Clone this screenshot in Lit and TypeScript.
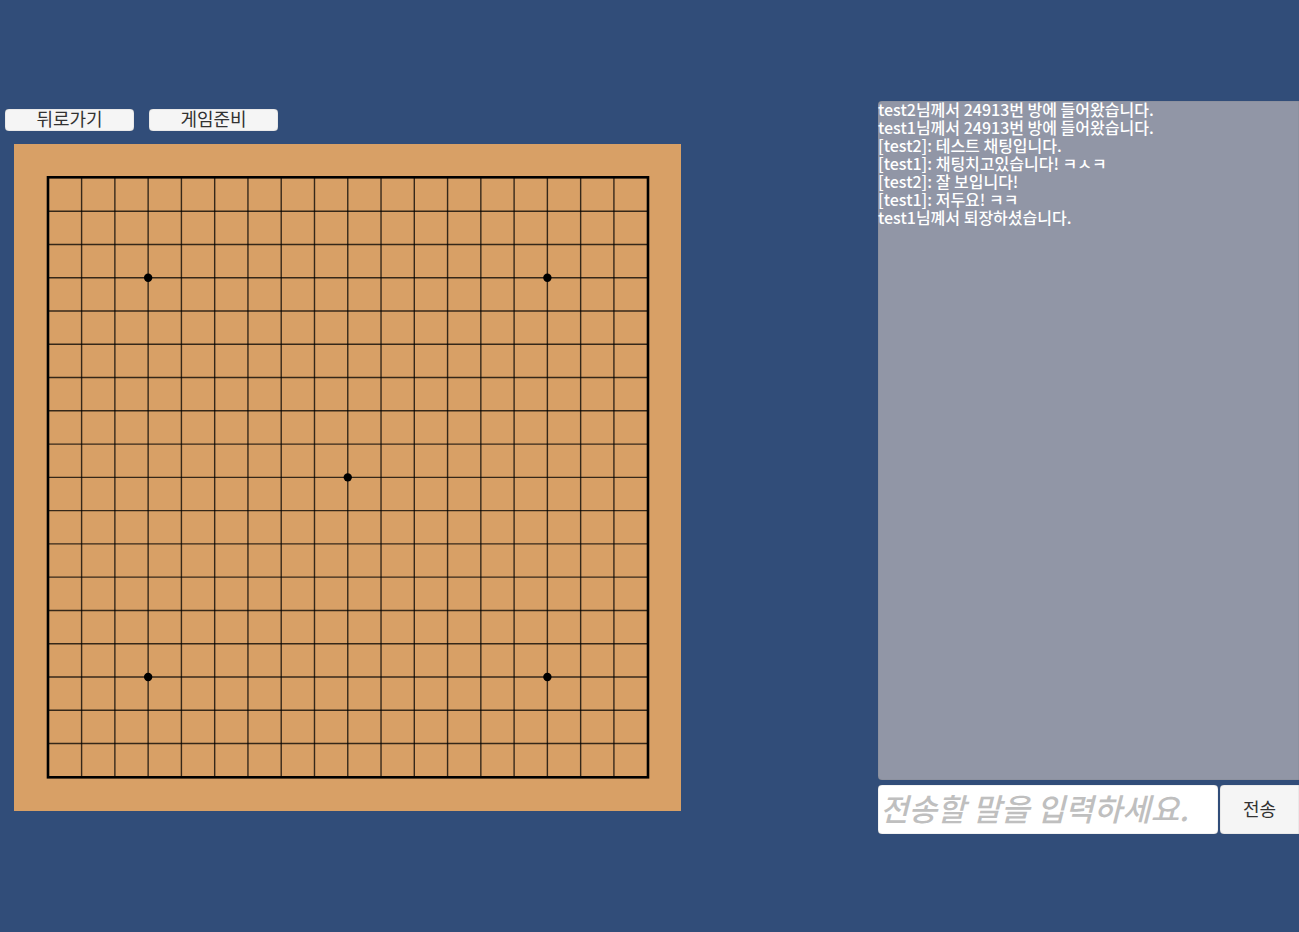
import { LitElement, html, svg, css } from "lit";
import { customElement, state } from "lit/decorators.js";

const FIRST = 34;
const LAST = 634;
const INNER = Array.from({ length: 17 }, (_, i) => 67.6 + i * 33.27);
const STARS: [number, number][] = [
  [3, 3],
  [15, 3],
  [9, 9],
  [3, 15],
  [15, 15],
];

@customElement("go-board")
export class GoBoard extends LitElement {
  static styles = css`
    :host {
      display: block;
    }
    .board {
      display: block;
      width: 100%;
      height: auto;
      background: #d8a066;
    }
    .line {
      stroke: #000;
      stroke-opacity: 0.75;
      stroke-width: 1.4;
    }
    .frame {
      fill: none;
      stroke: #000;
      stroke-width: 2.6;
    }
  `;

  render() {
    return html`<svg class="board" viewBox="0 0 667 667" role="img" aria-label="바둑판">
      ${INNER.map(
        (p) => svg`
          <line class="line" x1=${p} y1=${FIRST} x2=${p} y2=${LAST}></line>
          <line class="line" x1=${FIRST} y1=${p - 0.4} x2=${LAST} y2=${p - 0.4}></line>`
      )}
      <rect class="frame" x=${FIRST} y="33.3" width="600" height="600"></rect>
      ${STARS.map(
        ([c, r]) => svg`<circle cx=${INNER[c - 1]} cy=${INNER[r - 1] - 0.4} r="4.2"></circle>`
      )}
    </svg>`;
  }
}

@customElement("app-root")
export class AppRoot extends LitElement {
  @state() private messages = [
    "test2님께서 24913번 방에 들어왔습니다.",
    "test1님께서 24913번 방에 들어왔습니다.",
    "[test2]: 테스트 채팅입니다.",
    "[test1]: 채팅치고있습니다! ㅋㅅㅋ",
    "[test2]: 잘 보입니다!",
    "[test1]: 저두요! ㅋㅋ",
    "test1님꼐서 퇴장하셨습니다.",
  ];

  static styles = css`
    :host {
      display: block;
      box-sizing: border-box;
      min-height: 100vh;
      padding: 101px 0 98px;
      background: #314d79;
      font-family: "Noto Sans CJK KR", sans-serif;
    }
    .room {
      display: grid;
      grid-template-columns: minmax(0, 1fr) 421px;
    }
    .game {
      padding: 8px 0 23px;
    }
    .toolbar {
      display: flex;
      gap: 15px;
      padding-left: 5px;
      margin-bottom: 13px;
    }
    .button {
      border: 0;
      padding: 0 0 3px;
      border-radius: 4px;
      background: #f5f5f5;
      color: #323232;
      font-family: inherit;
      font-size: 18px;
      line-height: 19px;
      box-shadow: inset 0 0 1px #777;
    }
    .tool {
      width: 129px;
      height: 22px;
    }
    .play {
      max-width: 667px;
      margin-left: 14px;
    }
    .chat {
      display: flex;
      flex-direction: column;
      gap: 5px;
    }
    .log {
      display: flex;
      flex: 1;
      flex-direction: column;
      gap: 2px;
      margin: 0;
      padding: 0;
      list-style: none;
      border-radius: 4px 0 0 4px;
      background: #9196a6;
      color: #fff;
      font-size: 16px;
      font-weight: 500;
      line-height: 16px;
      box-shadow: inset 0 0 1px #666;
    }
    .form {
      display: flex;
      gap: 2px;
      height: 49px;
    }
    .entry {
      flex: 1;
      min-width: 0;
      border: 0;
      padding: 0 2px 4px;
      border-radius: 4px;
      background: #fff;
      color: #323232;
      font-family: inherit;
      font-size: 31px;
      font-weight: 500;
      box-shadow: inset 0 0 1px #777;
    }
    .entry::placeholder {
      color: #bfbfbf;
      font-style: italic;
      opacity: 1;
    }
    .send {
      width: 79px;
      border-radius: 4px 0 0 4px;
    }
  `;

  private send(e: Event) {
    e.preventDefault();
    const input = this.renderRoot.querySelector("input")!;
    if (!input.value) return;
    this.messages = [...this.messages, input.value];
    input.value = "";
  }

  render() {
    return html`<main class="room">
      <section class="game">
        <nav class="toolbar">
          <button class="button tool" type="button">뒤로가기</button>
          <button class="button tool" type="button">게임준비</button>
        </nav>
        <go-board class="play"></go-board>
      </section>
      <section class="chat">
        <ul class="log">
          ${this.messages.map((m) => html`<li>${m}</li>`)}
        </ul>
        <form class="form" @submit=${this.send}>
          <input class="entry" type="text" aria-label="전송할 말" placeholder="전송할 말을 입력하세요." />
          <button class="button send" type="submit">전송</button>
        </form>
      </section>
    </main>`;
  }
}
